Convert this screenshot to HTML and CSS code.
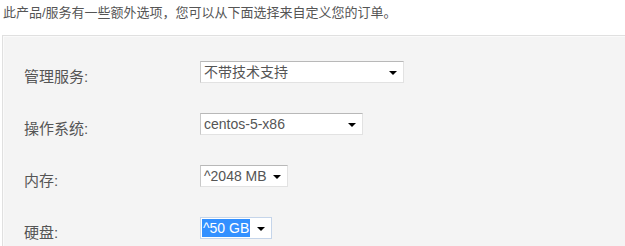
FILE: index.html
```html
<!DOCTYPE html>
<html lang="zh-CN">
<head>
<meta charset="utf-8">
<title>配置选项</title>
<link rel="stylesheet" href="styles.css">
</head>
<body>
<p class="intro">此产品/服务有一些额外选项，您可以从下面选择来自定义您的订单。</p>
<div class="panel">
  <div class="row">
    <label class="label">管理服务:</label>
    <div class="select w1"><span class="val">不带技术支持</span><span class="arrow"></span></div>
  </div>
  <div class="row">
    <label class="label">操作系统:</label>
    <div class="select w2"><span class="val">centos-5-x86</span><span class="arrow"></span></div>
  </div>
  <div class="row">
    <label class="label">内存:</label>
    <div class="select w3"><span class="val">^2048 MB</span><span class="arrow"></span></div>
  </div>
  <div class="row last">
    <label class="label">硬盘:</label>
    <div class="select w4 focused"><span class="val sel">^50 GB</span><span class="arrow"></span></div>
  </div>
</div>
</body>
</html>
```
FILE: styles.css
```css
html, body {
  margin: 0;
  padding: 0;
  background: #fff;
  overflow: hidden;
}
body {
  font-family: "Liberation Sans", "Noto Sans CJK SC", sans-serif;
  color: #555;
}
.intro {
  margin: 0;
  padding: 5px 0 0 3px;
  height: 30px;
  font-size: 13px;
  line-height: 16px;
  color: #555;
}
.panel {
  margin-left: 2px;
  background: #f4f4f4;
  border: 1px solid #e0e0e0;
  border-right: none;
  border-bottom: none;
  box-shadow: inset 1px 1px 0 #fafafa;
  padding: 25px 0 0 21px;
  height: 211px;
  box-sizing: border-box;
}
.row {
  display: flex;
  align-items: flex-start;
  height: 52px;
}
.row.last {
  height: 30px;
}
.label {
  width: 176px;
  font-size: 15px;
  line-height: 22px;
  padding-top: 5px;
  color: #555;
}
.select {
  position: relative;
  height: 22px;
  box-sizing: border-box;
  background: #fff;
  border: 1px solid #e2e2e2;
  border-top-color: #b8b8b8;
  border-left-color: #c8c8c8;
  display: flex;
  align-items: center;
  padding-left: 3px;
  font-size: 14px;
  color: #555;
}
.w1 { width: 204px; }
.w2 { width: 163px; }
.w3 { width: 88px; }
.w4 { width: 72px; border-color: #c5d5ea; }
.val {
  line-height: 18px;
  white-space: nowrap;
}
.sel {
  background: #3390ff;
  color: #fff;
  margin-left: -2px;
  padding: 0 1px;
}
.arrow {
  position: absolute;
  right: 6px;
  top: 9px;
  width: 0;
  height: 0;
  border-left: 4px solid transparent;
  border-right: 4px solid transparent;
  border-top: 4px solid #000;
}
```
